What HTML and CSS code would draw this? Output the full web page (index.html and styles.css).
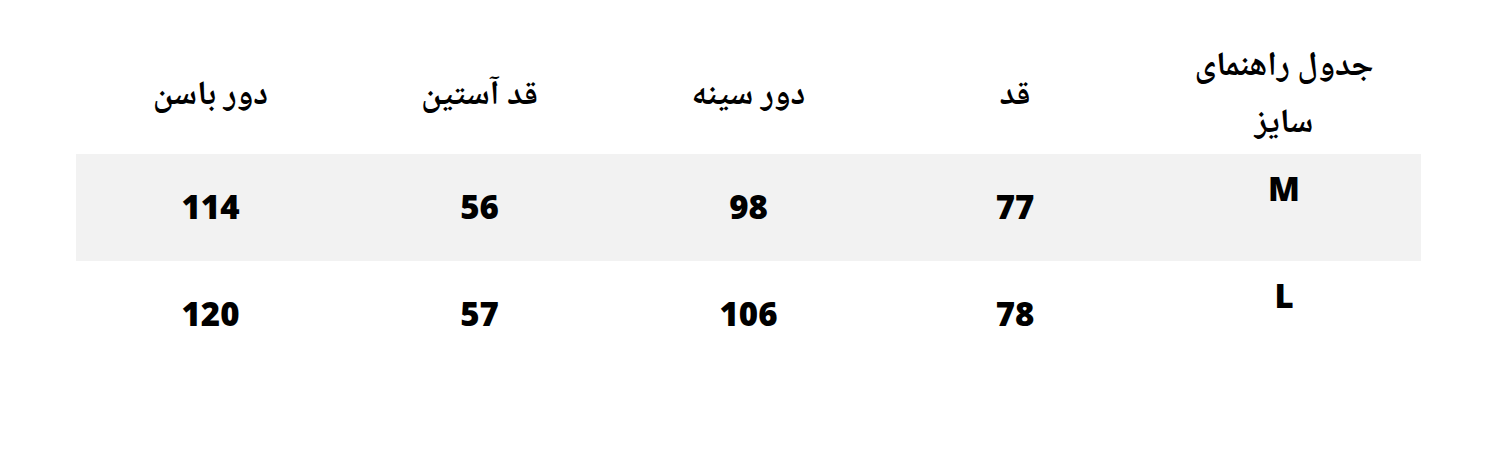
FILE: index.html
```html
<!DOCTYPE html>
<html lang="fa" dir="rtl">
<head>
<meta charset="utf-8">
<title>جدول راهنمای سایز</title>
<link rel="stylesheet" href="styles.css">
</head>
<body>
<div class="page">
  <table class="size-table">
    <colgroup>
      <col class="c-size">
      <col class="c-qad">
      <col class="c-std">
      <col class="c-std">
      <col class="c-std">
    </colgroup>
    <thead>
      <tr>
        <th class="title">جدول راهنمای<br>سایز</th>
        <th>قد</th>
        <th>دور سینه</th>
        <th>قد آستین</th>
        <th>دور باسن</th>
      </tr>
    </thead>
    <tbody>
      <tr class="shaded">
        <td class="size">M</td>
        <td>77</td>
        <td>98</td>
        <td>56</td>
        <td>114</td>
      </tr>
      <tr>
        <td class="size">L</td>
        <td>78</td>
        <td>106</td>
        <td>57</td>
        <td>120</td>
      </tr>
    </tbody>
  </table>
</div>
</body>
</html>
```

FILE: styles.css
```css
html, body {
  margin: 0;
  padding: 0;
  background: #ffffff;
}

.page {
  padding: 40px 80px 0 76px;
}

.size-table {
  direction: rtl;
  width: 1345px;
  border-collapse: collapse;
  table-layout: fixed;
  color: #000;
}

.c-size { width: 274px; }
.c-qad { width: 264px; }
.c-std { width: 269px; }

.size-table th {
  height: 113px;
  padding: 0;
  text-align: center;
  vertical-align: middle;
  font-family: "Noto Naskh Arabic", "Noto Sans Arabic", "Amiri", "DejaVu Sans", sans-serif;
  font-weight: bold;
  font-size: 34px;
  line-height: 57px;
}

.size-table td {
  height: 105px;
  padding: 0 0 2px 0;
  text-align: center;
  vertical-align: middle;
  font-family: "Open Sans", "Liberation Sans", sans-serif;
  font-weight: 800;
  font-size: 33px;
  line-height: 40px;
}

.size-table td.size {
  vertical-align: top;
  padding: 15px 0 0 0;
  height: 92px;
}

.shaded td {
  background: #f2f2f2;
}
```
